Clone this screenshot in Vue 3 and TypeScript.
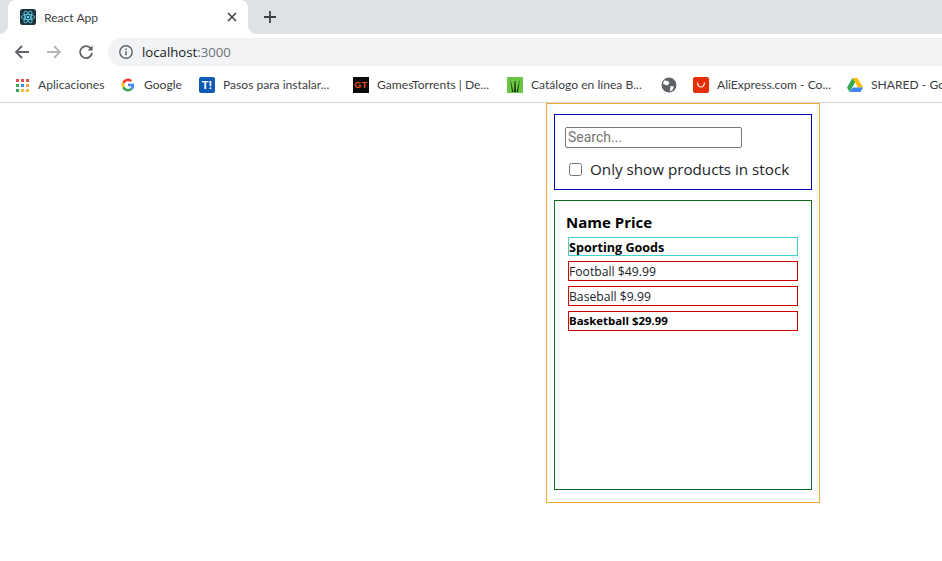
<template>
  <div class="browser">
    <!-- Tab strip -->
    <div class="tab-strip">
      <div class="tab">
        <svg class="favicon" width="16" height="16" viewBox="0 0 16 16">
          <rect width="16" height="16" rx="2.5" fill="#20343c" />
          <g fill="none" stroke="#61dafb" stroke-width=".8">
            <ellipse cx="8" cy="8" rx="6.6" ry="2.6" />
            <ellipse cx="8" cy="8" rx="6.6" ry="2.6" transform="rotate(60 8 8)" />
            <ellipse cx="8" cy="8" rx="6.6" ry="2.6" transform="rotate(120 8 8)" />
          </g>
          <circle cx="8" cy="8" r="1.3" fill="#61dafb" />
        </svg>
        <span class="tab-title">React App</span>
        <svg class="tab-close" width="10" height="10" viewBox="0 0 10 10">
          <path d="M1 1l8 8M9 1l-8 8" stroke="#45484c" stroke-width="1.7" fill="none" />
        </svg>
      </div>
      <svg class="new-tab" width="12" height="12" viewBox="0 0 12 12">
        <path d="M6 0v12M0 6h12" stroke="#3c4043" stroke-width="1.8" fill="none" />
      </svg>
    </div>

    <!-- Toolbar -->
    <div class="toolbar">
      <svg class="nav-icon" width="16" height="16" viewBox="0 0 16 16">
        <path d="M15 8H2M8 2L2 8l6 6" stroke="#5f6368" stroke-width="1.8" fill="none" />
      </svg>
      <svg class="nav-icon" width="16" height="16" viewBox="0 0 16 16">
        <path d="M1 8h13M8 2l6 6-6 6" stroke="#b4b6b9" stroke-width="1.8" fill="none" />
      </svg>
      <svg class="nav-icon" width="16" height="16" viewBox="0 0 16 16">
        <path d="M13.2 5A6 6 0 1 0 14 9" stroke="#5f6368" stroke-width="1.8" fill="none" />
        <path d="M14.6 1.6v5h-5z" fill="#5f6368" />
      </svg>
      <div class="omnibox">
        <svg width="16" height="16" viewBox="0 0 16 16">
          <circle cx="8" cy="8" r="6.2" stroke="#5f6368" stroke-width="1.4" fill="none" />
          <path d="M8 7.2v4M8 4.4v1.5" stroke="#5f6368" stroke-width="1.5" fill="none" />
        </svg>
        <span class="url">localhost<span class="url-port">:3000</span></span>
      </div>
    </div>

    <!-- Bookmarks bar -->
    <div class="bookmarks">
      <div v-for="b in bookmarks" :key="b.label + b.kind" class="bookmark" :style="{ width: b.width + 'px' }">
        <svg v-if="b.kind === 'apps'" class="fav-apps" width="14" height="14" viewBox="0 0 14 14">
          <rect v-for="d in appDots" :key="d.x + '-' + d.y" :x="d.x" :y="d.y" width="3" height="3" :fill="d.fill" />
        </svg>
        <svg v-else-if="b.kind === 'google'" class="fav-apps" width="14" height="14" viewBox="0 0 48 48">
          <path fill="#4285f4" d="M45 24.500c0-1.600-.1-3.100-.4-4.500H24v8.500h11.800c-.5 2.700-2 5-4.400 6.600l7 5.400c4.100-3.800 6.600-9.400 6.600-16z" />
          <path fill="#34a853" d="M24 46c5.900 0 10.900-2 14.400-5.300l-7-5.400c-1.900 1.300-4.400 2-7.400 2-5.700 0-10.500-3.800-12.200-9l-7.200 5.600C8.200 41.100 15.500 46 24 46z" />
          <path fill="#fbbc05" d="M11.800 28.300c-.9-2.700-.9-5.700 0-8.500l-7.200-5.600a22 22 0 0 0 0 19.700z" />
          <path fill="#ea4335" d="M24 10.800c3.200 0 6 1.100 8.300 3.300l6.200-6.200C34.800 4.300 29.900 2 24 2 15.500 2 8.200 6.900 4.600 14.200l7.200 5.600c1.700-5.200 6.500-9 12.200-9z" />
        </svg>
        <span v-else-if="b.kind === 't'" class="fav-t">T!</span>
        <span v-else-if="b.kind === 'gt'" class="fav-gt">GT</span>
        <svg v-else-if="b.kind === 'cat'" width="16" height="16" viewBox="0 0 16 16">
          <rect width="16" height="16" fill="#6cc644" />
          <path d="M3 1l2 14 1.500 0zM7.500 4l-.5 11h2l-.5-11zM13 1l-3.500 14h1.500z" fill="#173a12" />
        </svg>
        <svg v-else-if="b.kind === 'globe'" width="16" height="16" viewBox="0 0 16 16">
          <circle cx="8" cy="8" r="7.500" fill="#5f6368" />
          <path d="M3 3.500l4 .5 1.500 2-2 2.500-4.500-1.500zM9.500 9l3.500.5-1.500 3.500-2.500 1.500z" fill="#fff" />
        </svg>
        <svg v-else-if="b.kind === 'ali'" width="16" height="16" viewBox="0 0 16 16">
          <rect width="16" height="16" rx="2" fill="#e62e04" />
          <path d="M4.500 5.500c.5 6 6.500 6 7 0" stroke="#fff" stroke-width="1.200" fill="none" />
        </svg>
        <svg v-else-if="b.kind === 'drive'" width="16" height="16" viewBox="0 0 16 16">
          <path d="M5.500 1h5L16 10.500h-5z" fill="#fbbc05" />
          <path d="M5.500 1L0 10.500 2.500 15 8 5.500z" fill="#34a853" />
          <path d="M5.500 10.500H16L13.500 15h-11z" fill="#4285f4" />
        </svg>
        <span v-if="b.label" class="bookmark-label">{{ b.label }}</span>
      </div>
    </div>

    <!-- Page -->
    <div class="page">
      <div class="filterable-table">
        <div class="search-bar">
          <input class="search-input" type="text" placeholder="Search..." />
          <label class="stock-label">
            <input class="stock-check" type="checkbox" />
            <span>Only show products in stock</span>
          </label>
        </div>
        <div class="product-table">
          <div class="table-head">Name Price</div>
          <div class="category-row">Sporting Goods</div>
          <div
            v-for="p in products"
            :key="p.name"
            class="product-row"
            :class="{ 'out-of-stock': !p.stocked }"
          >
            {{ p.name }} {{ p.price }}
          </div>
        </div>
      </div>
    </div>
  </div>
</template>

<script setup lang="ts">
const bookmarks = [
  { kind: 'apps', label: 'Aplicaciones', width: 106 },
  { kind: 'google', label: 'Google', width: 78 },
  { kind: 't', label: 'Pasos para instalar...', width: 154 },
  { kind: 'gt', label: 'GamesTorrents | De...', width: 154 },
  { kind: 'cat', label: 'Catálogo en línea B...', width: 154 },
  { kind: 'globe', label: '', width: 32 },
  { kind: 'ali', label: 'AliExpress.com - Co...', width: 154 },
  { kind: 'drive', label: 'SHARED - Google Drive', width: 160 },
]

const dotColors = [
  '#d9534a', '#d9534a', '#d9534a',
  '#34a853', '#4285f4', '#f2a93b',
  '#34a853', '#f2c037', '#f2c037',
]
const appDots = dotColors.map((fill, i) => ({
  x: 1 + (i % 3) * 5,
  y: 1 + Math.floor(i / 3) * 5,
  fill,
}))

const products = [
  { name: 'Football', price: '$49.99', stocked: true },
  { name: 'Baseball', price: '$9.99', stocked: true },
  { name: 'Basketball', price: '$29.99', stocked: false },
]
</script>

<style>
html, body {
  margin: 0;
  background: #fff;
  overflow: hidden;
}
</style>

<style scoped>
.browser {
  width: 942px;
  height: 561px;
  overflow: hidden;
  font-family: "Open Sans", "Noto Sans", sans-serif;
}

/* Tabs */
.tab-strip {
  height: 34px;
  background: #dee1e6;
  display: flex;
  align-items: center;
  padding-left: 8px;
  box-sizing: border-box;
}
.tab {
  position: relative;
  width: 240px;
  height: 34px;
  background: #fff;
  border-radius: 8px 8px 0 0;
  display: flex;
  align-items: center;
  padding: 0 11px 0 12px;
  box-sizing: border-box;
}
.tab::before, .tab::after {
  content: "";
  position: absolute;
  bottom: 0;
  width: 8px;
  height: 8px;
}
.tab::before {
  left: -8px;
  background: radial-gradient(circle at 0 0, #dee1e6 7.500px, #fff 8px);
}
.tab::after {
  right: -8px;
  background: radial-gradient(circle at 100% 0, #dee1e6 7.500px, #fff 8px);
}
.favicon { flex-shrink: 0; }
.tab-title {
  margin-left: 8px;
  font: 12.100px Lato, sans-serif;
  color: #3c4043;
  flex: 1;
}
.new-tab { margin-left: 16px; }

/* Toolbar */
.toolbar {
  height: 33px;
  box-sizing: border-box;
  padding: 3px 0 0 14px;
  background: #fff;
  display: flex;
  align-items: center;
  gap: 16px;
}
.nav-icon { flex-shrink: 0; }
.omnibox {
  flex: 1;
  height: 28px;
  margin-left: -2px;
  background: #f1f3f4;
  border-radius: 14px 0 0 14px;
  display: flex;
  align-items: center;
  padding-left: 10px;
  gap: 8px;
}
.url {
  font-size: 13.200px;
  color: #202124;
}
.url-port { color: #6f7377; }

/* Bookmarks */
.bookmarks {
  height: 36px;
  background: #fff;
  border-bottom: 1px solid #d4d5d6;
  box-sizing: border-box;
  display: flex;
  align-items: center;
  padding-left: 15px;
  white-space: nowrap;
  overflow: hidden;
}
.bookmark {
  display: flex;
  align-items: center;
  gap: 8px;
  flex-shrink: 0;
}
.fav-apps { margin-right: 1px; }
.bookmark-label {
  font: 12.100px Lato, sans-serif;
  color: #3c4043;
}
.fav-t {
  width: 16px;
  height: 16px;
  border-radius: 2px;
  background: #0d5bb5;
  color: #fff;
  font: bold 11px/16px "Liberation Sans", sans-serif;
  text-align: center;
}
.fav-gt {
  width: 16px;
  height: 16px;
  background: #0a0a0a;
  color: #f0501e;
  font: bold 9px/16px "Liberation Sans", sans-serif;
  letter-spacing: .5px;
  text-align: center;
}

/* Page */
.filterable-table {
  width: 274px;
  height: 400px;
  margin-left: 546px;
  border: 1px solid #eeaa3c;
  box-sizing: border-box;
  padding: 10px 7px;
  color: #000;
}
.search-bar {
  height: 76px;
  border: 1px solid #0000b4;
  box-sizing: border-box;
  padding: 12px 10px 0;
}
.search-input {
  display: block;
  width: 177px;
  height: 21px;
  box-sizing: border-box;
  margin: 0;
  padding: 0 2px 2px;
  border: 1px solid #767676;
  border-radius: 2px;
  font: 14px Roboto, sans-serif;
  outline: none;
}
.search-input::placeholder { color: #757575; }
.stock-label {
  display: flex;
  align-items: center;
  margin-top: 10px;
  padding-left: 4px;
  font-size: 15.200px;
  line-height: 22px;
  color: #212529;
}
.stock-check {
  width: 13px;
  height: 13px;
  margin: 0 8px 0 0;
}
.product-table {
  height: 290px;
  margin-top: 10px;
  border: 1px solid #0b6b1e;
  box-sizing: border-box;
  padding: 11px 13px 0;
}
.table-head {
  margin-left: -2px;
  font-size: 15px;
  line-height: 21px;
  font-weight: 700;
}
.category-row, .product-row {
  box-sizing: border-box;
  height: 20px;
}
.category-row {
  height: 19px;
  margin-top: 4px;
  margin-bottom: 5px;
  border: 1px solid #48cfcf;
  font-size: 12.600px;
  line-height: 19px;
  font-weight: 700;
}
.product-row {
  margin-bottom: 5px;
  border: 1px solid #d00000;
  font-size: 12.200px;
  line-height: 19px;
  color: #212529;
}
.out-of-stock {
  font-size: 11.400px;
  line-height: 17px;
  font-weight: 700;
  color: #000;
}
</style>
